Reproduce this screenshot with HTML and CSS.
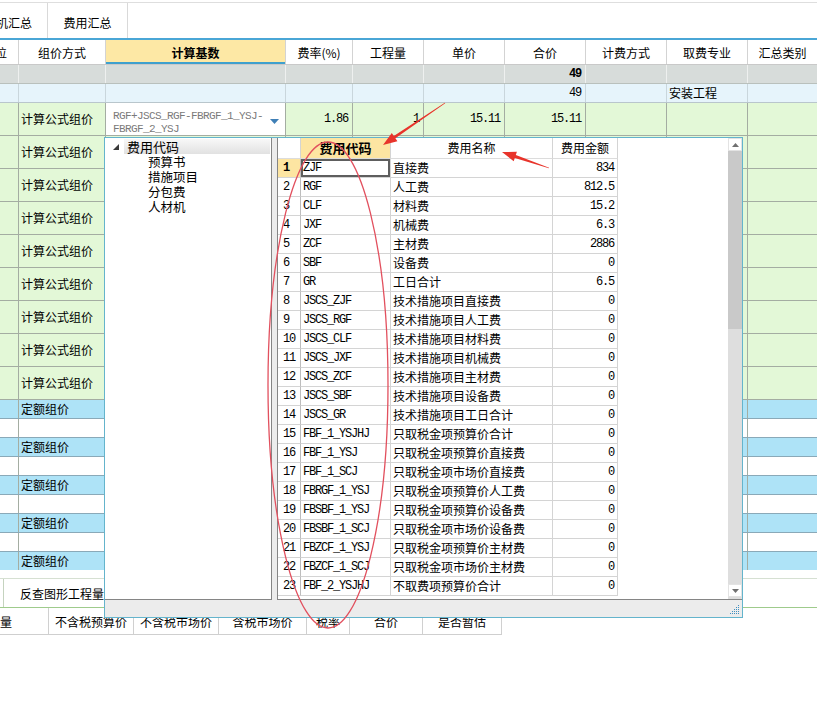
FILE: index.html
```html
<!DOCTYPE html>
<html lang="zh-CN">
<head>
<meta charset="utf-8">
<title>费用代码</title>
<link rel="stylesheet" href="styles.css">
</head>
<body>
<div class="tabs">
  <div class="tab tab-first">机汇总</div>
  <div class="tab tab-2">费用汇总</div>
</div>

<div class="main">
  <div class="row head">
    <div class="c c-cut"><span>位</span></div>
    <div class="c">组价方式</div>
    <div class="c base">计算基数</div>
    <div class="c">费率(%)</div>
    <div class="c">工程量</div>
    <div class="c">单价</div>
    <div class="c">合价</div>
    <div class="c">计费方式</div>
    <div class="c">取费专业</div>
    <div class="c">汇总类别</div>
  </div>
  <div class="row r-gray">
    <div class="c"></div><div class="c"></div><div class="c"></div><div class="c"></div><div class="c"></div><div class="c"></div>
    <div class="c r mono b">49</div><div class="c"></div><div class="c"></div><div class="c"></div>
  </div>
  <div class="row r-lb">
    <div class="c"></div><div class="c"></div><div class="c"></div><div class="c"></div><div class="c"></div><div class="c"></div>
    <div class="c r mono">49</div><div class="c"></div><div class="c">安装工程</div><div class="c"></div>
  </div>
  <div class="row r-green">
    <div class="c"></div>
    <div class="c">计算公式组价</div>
    <div class="c dd">
      <div class="dd-text">RGF+JSCS_RGF-FBRGF_1_YSJ-
FBRGF_2_YSJ</div>
      <svg class="dd-arrow" width="9" height="5" viewBox="0 0 9 5"><polygon points="0,0 9,0 4.5,5" fill="#3f7fb6"/></svg>
    </div>
    <div class="c r mono">1.86</div>
    <div class="c r mono">1</div>
    <div class="c r mono">15.11</div>
    <div class="c r mono">15.11</div>
    <div class="c"></div><div class="c"></div><div class="c"></div>
  </div>
  <div class="row r-green"><div class="c"></div><div class="c">计算公式组价</div><div class="c"></div><div class="c"></div><div class="c"></div><div class="c"></div><div class="c"></div><div class="c"></div><div class="c"></div><div class="c"></div></div>
  <div class="row r-green"><div class="c"></div><div class="c">计算公式组价</div><div class="c"></div><div class="c"></div><div class="c"></div><div class="c"></div><div class="c"></div><div class="c"></div><div class="c"></div><div class="c"></div></div>
  <div class="row r-green"><div class="c"></div><div class="c">计算公式组价</div><div class="c"></div><div class="c"></div><div class="c"></div><div class="c"></div><div class="c"></div><div class="c"></div><div class="c"></div><div class="c"></div></div>
  <div class="row r-green"><div class="c"></div><div class="c">计算公式组价</div><div class="c"></div><div class="c"></div><div class="c"></div><div class="c"></div><div class="c"></div><div class="c"></div><div class="c"></div><div class="c"></div></div>
  <div class="row r-green"><div class="c"></div><div class="c">计算公式组价</div><div class="c"></div><div class="c"></div><div class="c"></div><div class="c"></div><div class="c"></div><div class="c"></div><div class="c"></div><div class="c"></div></div>
  <div class="row r-green"><div class="c"></div><div class="c">计算公式组价</div><div class="c"></div><div class="c"></div><div class="c"></div><div class="c"></div><div class="c"></div><div class="c"></div><div class="c"></div><div class="c"></div></div>
  <div class="row r-green"><div class="c"></div><div class="c">计算公式组价</div><div class="c"></div><div class="c"></div><div class="c"></div><div class="c"></div><div class="c"></div><div class="c"></div><div class="c"></div><div class="c"></div></div>
  <div class="row r-green"><div class="c"></div><div class="c">计算公式组价</div><div class="c"></div><div class="c"></div><div class="c"></div><div class="c"></div><div class="c"></div><div class="c"></div><div class="c"></div><div class="c"></div></div>
  <div class="row r-blue"><div class="c"></div><div class="c">定额组价</div><div class="c"></div><div class="c"></div><div class="c"></div><div class="c"></div><div class="c"></div><div class="c"></div><div class="c"></div><div class="c"></div></div>
  <div class="row r-white"><div class="c"></div><div class="c"></div><div class="c"></div><div class="c"></div><div class="c"></div><div class="c"></div><div class="c"></div><div class="c"></div><div class="c"></div><div class="c"></div></div>
  <div class="row r-blue"><div class="c"></div><div class="c">定额组价</div><div class="c"></div><div class="c"></div><div class="c"></div><div class="c"></div><div class="c"></div><div class="c"></div><div class="c"></div><div class="c"></div></div>
  <div class="row r-white"><div class="c"></div><div class="c"></div><div class="c"></div><div class="c"></div><div class="c"></div><div class="c"></div><div class="c"></div><div class="c"></div><div class="c"></div><div class="c"></div></div>
  <div class="row r-blue"><div class="c"></div><div class="c">定额组价</div><div class="c"></div><div class="c"></div><div class="c"></div><div class="c"></div><div class="c"></div><div class="c"></div><div class="c"></div><div class="c"></div></div>
  <div class="row r-white"><div class="c"></div><div class="c"></div><div class="c"></div><div class="c"></div><div class="c"></div><div class="c"></div><div class="c"></div><div class="c"></div><div class="c"></div><div class="c"></div></div>
  <div class="row r-blue"><div class="c"></div><div class="c">定额组价</div><div class="c"></div><div class="c"></div><div class="c"></div><div class="c"></div><div class="c"></div><div class="c"></div><div class="c"></div><div class="c"></div></div>
  <div class="row r-white"><div class="c"></div><div class="c"></div><div class="c"></div><div class="c"></div><div class="c"></div><div class="c"></div><div class="c"></div><div class="c"></div><div class="c"></div><div class="c"></div></div>
  <div class="row r-blue"><div class="c"></div><div class="c">定额组价</div><div class="c"></div><div class="c"></div><div class="c"></div><div class="c"></div><div class="c"></div><div class="c"></div><div class="c"></div><div class="c"></div></div>
</div>

<div class="gap"></div>
<div class="btabs"><div class="btab">反查图形工程量</div></div>
<div class="bhead">
  <div class="bc bl">量</div>
  <div class="bc">不含税预算价</div>
  <div class="bc">不含税市场价</div>
  <div class="bc">含税市场价</div>
  <div class="bc">税率</div>
  <div class="bc">合价</div>
  <div class="bc">是否暂估</div>
</div>

<div class="popup">
  <div class="pop-body">
    <div class="tree">
      <div class="tree-root">
        <svg class="exp" width="6" height="6" viewBox="0 0 6 6"><polygon points="6,0 6,6 0,6" fill="#3a3a3a"/></svg>
        <span class="tree-label">费用代码</span>
      </div>
      <div class="tree-child">预算书</div>
      <div class="tree-child">措施项目</div>
      <div class="tree-child">分包费</div>
      <div class="tree-child">人材机</div>
    </div>
    <div class="list">
      <div class="lgrid">
        <div class="lrow lhead"><div class="lc"></div><div class="lc hcode">费用代码</div><div class="lc hname">费用名称</div><div class="lc hname">费用金额</div></div>
        <div class="lrow"><div class="lc n n-sel">1</div><div class="lc code sel">ZJF</div><div class="lc">直接费</div><div class="lc amt">834</div></div>
        <div class="lrow"><div class="lc n">2</div><div class="lc code">RGF</div><div class="lc">人工费</div><div class="lc amt">812.5</div></div>
        <div class="lrow"><div class="lc n">3</div><div class="lc code">CLF</div><div class="lc">材料费</div><div class="lc amt">15.2</div></div>
        <div class="lrow"><div class="lc n">4</div><div class="lc code">JXF</div><div class="lc">机械费</div><div class="lc amt">6.3</div></div>
        <div class="lrow"><div class="lc n">5</div><div class="lc code">ZCF</div><div class="lc">主材费</div><div class="lc amt">2886</div></div>
        <div class="lrow"><div class="lc n">6</div><div class="lc code">SBF</div><div class="lc">设备费</div><div class="lc amt">0</div></div>
        <div class="lrow"><div class="lc n">7</div><div class="lc code">GR</div><div class="lc">工日合计</div><div class="lc amt">6.5</div></div>
        <div class="lrow"><div class="lc n">8</div><div class="lc code">JSCS_ZJF</div><div class="lc">技术措施项目直接费</div><div class="lc amt">0</div></div>
        <div class="lrow"><div class="lc n">9</div><div class="lc code">JSCS_RGF</div><div class="lc">技术措施项目人工费</div><div class="lc amt">0</div></div>
        <div class="lrow"><div class="lc n">10</div><div class="lc code">JSCS_CLF</div><div class="lc">技术措施项目材料费</div><div class="lc amt">0</div></div>
        <div class="lrow"><div class="lc n">11</div><div class="lc code">JSCS_JXF</div><div class="lc">技术措施项目机械费</div><div class="lc amt">0</div></div>
        <div class="lrow"><div class="lc n">12</div><div class="lc code">JSCS_ZCF</div><div class="lc">技术措施项目主材费</div><div class="lc amt">0</div></div>
        <div class="lrow"><div class="lc n">13</div><div class="lc code">JSCS_SBF</div><div class="lc">技术措施项目设备费</div><div class="lc amt">0</div></div>
        <div class="lrow"><div class="lc n">14</div><div class="lc code">JSCS_GR</div><div class="lc">技术措施项目工日合计</div><div class="lc amt">0</div></div>
        <div class="lrow"><div class="lc n">15</div><div class="lc code">FBF_1_YSJHJ</div><div class="lc">只取税金项预算价合计</div><div class="lc amt">0</div></div>
        <div class="lrow"><div class="lc n">16</div><div class="lc code">FBF_1_YSJ</div><div class="lc">只取税金项预算价直接费</div><div class="lc amt">0</div></div>
        <div class="lrow"><div class="lc n">17</div><div class="lc code">FBF_1_SCJ</div><div class="lc">只取税金项市场价直接费</div><div class="lc amt">0</div></div>
        <div class="lrow"><div class="lc n">18</div><div class="lc code">FBRGF_1_YSJ</div><div class="lc">只取税金项预算价人工费</div><div class="lc amt">0</div></div>
        <div class="lrow"><div class="lc n">19</div><div class="lc code">FBSBF_1_YSJ</div><div class="lc">只取税金项预算价设备费</div><div class="lc amt">0</div></div>
        <div class="lrow"><div class="lc n">20</div><div class="lc code">FBSBF_1_SCJ</div><div class="lc">只取税金项市场价设备费</div><div class="lc amt">0</div></div>
        <div class="lrow"><div class="lc n">21</div><div class="lc code">FBZCF_1_YSJ</div><div class="lc">只取税金项预算价主材费</div><div class="lc amt">0</div></div>
        <div class="lrow"><div class="lc n">22</div><div class="lc code">FBZCF_1_SCJ</div><div class="lc">只取税金项市场价主材费</div><div class="lc amt">0</div></div>
        <div class="lrow"><div class="lc n">23</div><div class="lc code">FBF_2_YSJHJ</div><div class="lc">不取费项预算价合计</div><div class="lc amt">0</div></div>
      </div>
      <div class="vs">
        <div class="sb-btn"><svg width="7" height="4" viewBox="0 0 7 4"><polygon points="0,4 7,4 3.5,0" fill="#707070"/></svg></div>
        <div class="sb-thumb"></div>
        <div class="sb-track"></div>
        <div class="sb-btn"><svg width="7" height="4" viewBox="0 0 7 4"><polygon points="0,0 7,0 3.5,4" fill="#707070"/></svg></div>
      </div>
    </div>
  </div>
  <div class="pop-foot">
    <svg class="grip" width="10" height="10" viewBox="0 0 10 10">
      <g fill="#3f8fc0">
        <rect x="8" y="0" width="1" height="1"/>
        <rect x="6" y="2" width="1" height="1"/><rect x="8" y="2" width="1" height="1"/>
        <rect x="4" y="4" width="1" height="1"/><rect x="6" y="4" width="1" height="1"/><rect x="8" y="4" width="1" height="1"/>
        <rect x="2" y="6" width="1" height="1"/><rect x="4" y="6" width="1" height="1"/><rect x="6" y="6" width="1" height="1"/><rect x="8" y="6" width="1" height="1"/>
        <rect x="0" y="8" width="1" height="1"/><rect x="2" y="8" width="1" height="1"/><rect x="4" y="8" width="1" height="1"/><rect x="6" y="8" width="1" height="1"/><rect x="8" y="8" width="1" height="1"/>
      </g>
    </svg>
  </div>
</div>

<svg class="annot" width="817" height="720" viewBox="0 0 817 720">
  <ellipse cx="328" cy="385" rx="60" ry="243" fill="none" stroke="#e2505e" stroke-width="1.3"/>
  <polygon points="445.2,103.2 395.4,138.3 397.4,141.2 383,145 391.8,133 393.8,135.9 444.8,102.8" fill="#e8342b"/>
  <polygon points="549.1,167.7 515.8,155.1 516.9,151.8 502,152 513.7,161.2 514.8,157.9 548.9,168.3" fill="#e8342b"/>
</svg>
</body>
</html>
```

FILE: styles.css
```css
* { box-sizing: border-box; }

body {
  margin: 0;
  width: 817px;
  height: 720px;
  overflow: hidden;
  position: relative;
  background: #fff;
  color: #000;
  font-family: "Noto Sans CJK SC", "Noto Sans", sans-serif;
  font-size: 12px;
}

/* top tabs */
.tabs {
  display: flex;
  margin-top: 2px;
  height: 36px;
  border-top: 1px solid #dedede;
}
.tab {
  display: flex;
  align-items: center;
  justify-content: center;
  padding-top: 3px;
  border-right: 1px solid #d9d9d9;
  font-size: 12px;
  white-space: nowrap;
}
.tab-first {
  width: 48px;
  justify-content: flex-end;
  padding-right: 15px;
  overflow: hidden;
}
.tab-2 { width: 80px; }

/* main grid */
.main {
  height: 532px;
  overflow: hidden;
  border-top: 2px solid #4aa6d6;
}
.row {
  display: grid;
  grid-template-columns: 19px 87px 180px 67px 71px 81px 81px 81px 81px 69px;
  border-bottom: 1px solid #a4ada2;
}
.c {
  display: flex;
  align-items: center;
  padding: 0 2px;
  border-right: 1px solid #a4ada2;
  overflow: hidden;
  white-space: nowrap;
  line-height: 14px;
}
.c:last-child { border-right: none; }
.head { height: 25px; border-bottom-color: #c9c9c9; background: #fff; }
.head .c { justify-content: center; padding-top: 2px; border-right-color: #d3d3d3; }
.head .c-cut { justify-content: flex-start; padding: 2px 0 0; }
.c-cut span { margin-left: -5px; }
.head .base {
  background: #fde8a5;
  font-weight: bold;
  box-shadow: inset 0 -2px 0 #3fa0cd;
}

.r-gray { height: 19px; background: #d7dcda; border-bottom-color: #b9c0bc; }
.r-gray .c { border-right-color: #eef0ef; }
.r-lb { height: 19px; background: #e6f4fb; border-bottom-color: #b9c6cc; }
.r-lb .c { border-right-color: #c9d6dc; }
.r-green { height: 33px; background: #e3f8d7; }
.r-blue { height: 19px; background: #aee3f7; border-bottom-color: #8aa9b8; }
.r-white { height: 19px; background: #fff; border-bottom-color: #8aa9b8; }

.r { justify-content: flex-end; padding-right: 4px; }
.mono { font-family: "Liberation Mono", monospace; letter-spacing: -1.2px; }
.b { font-weight: bold; }

.dd {
  background: #fff;
  padding: 0;
  align-items: flex-start;
  justify-content: space-between;
}
.dd-text {
  font-family: "Liberation Mono", monospace;
  font-size: 11px;
  letter-spacing: -0.6px;
  color: #7a7a7a;
  line-height: 13px;
  padding: 7px 0 0 7px;
  white-space: pre;
}
.dd-arrow { margin: 16px 6px 0 0; flex: none; }

/* bottom panel */
.gap { height: 8px; }
.btabs {
  display: flex;
  height: 30px;
  border-top: 1px solid #d6e0d2;
  border-bottom: 1px solid #9fcb8c;
}
.btab {
  display: flex;
  align-items: center;
  margin-left: 3px;
  padding-left: 16px;
  border-left: 1px solid #c5d3bf;
  font-size: 12px;
}
.bhead {
  display: grid;
  grid-template-columns: 49px 85px 85px 88px 43px 73px 79px;
  width: 502px;
  height: 27px;
  border-bottom: 1px solid #cfcfcf;
}
.bc {
  display: flex;
  align-items: center;
  justify-content: center;
  border-right: 1px solid #d0d0d0;
  white-space: nowrap;
  overflow: hidden;
}
.bl { justify-content: flex-start; }

/* popup */
.popup {
  position: absolute;
  left: 104px;
  top: 137px;
  width: 639px;
  height: 481px;
  border: 1px solid #64b4cc;
  background: #ececec;
  display: flex;
  flex-direction: column;
}
.pop-body { display: flex; height: 462px; }
.tree {
  width: 167px;
  background: #fff;
  border-right: 1px solid #858585;
  border-bottom: 1px solid #858585;
  font-size: 12.5px;
}
.tree-root {
  display: flex;
  align-items: center;
  height: 15px;
  margin-top: 1px;
}
.exp { margin: 0 5px 0 8px; flex: none; }
.tree-label {
  flex: 1;
  margin-right: 1px;
  padding-left: 3px;
  line-height: 15px;
  font-size: 13px;
  background: linear-gradient(#f8f8f8, #e1e1e1);
}
.tree-child { padding-left: 43px; height: 15px; line-height: 15px; }

.list {
  flex: 1;
  margin-left: 5px;
  display: flex;
  background: #fff;
  border-left: 1px solid #858585;
  border-bottom: 1px solid #858585;
}
.lgrid { flex: 1; }
.lrow {
  display: grid;
  grid-template-columns: 23px 90px 162px 65px;
  width: 340px;
  height: 19px;
}
.lc {
  display: flex;
  align-items: center;
  padding-left: 2px;
  border-right: 1px solid #d4d4d4;
  border-bottom: 1px solid #d4d4d4;
  white-space: nowrap;
  overflow: hidden;
  line-height: 14px;
}
.lhead { height: 21px; }
.lhead .lc { justify-content: center; padding: 0; border-bottom-color: #dcdcdc; }
.hcode { background: #fde5a2; font-weight: bold; font-size: 13px; }
.hname { font-size: 12px; }
.n {
  font-family: "Liberation Mono", monospace;
  letter-spacing: -1.2px;
  padding-left: 5px;
  border-right-color: #bdbdbd;
}
.n-sel { background: #fde5a2; font-weight: bold; }
.code { font-family: "Liberation Mono", monospace; letter-spacing: -1.2px; }
.sel { box-shadow: inset 0 0 0 2px #5e5e5e; }
.amt {
  justify-content: flex-end;
  padding-right: 3px;
  font-family: "Liberation Mono", monospace;
  letter-spacing: -1.2px;
}

.vs {
  width: 14px;
  display: flex;
  flex-direction: column;
  background: #dedede;
  padding-bottom: 2px;
}
.sb-btn {
  height: 13px;
  background: #fff;
  border: 1px solid #e3e3e3;
  display: flex;
  align-items: center;
  justify-content: center;
  flex: none;
}
.sb-thumb { height: 178px; background: #c9c9c9; flex: none; }
.sb-track { flex: 1; background: #dedede; }

.pop-foot { flex: 1; position: relative; }
.grip { position: absolute; right: 2px; bottom: 2px; }

.annot { position: absolute; left: 0; top: 0; pointer-events: none; }
```
